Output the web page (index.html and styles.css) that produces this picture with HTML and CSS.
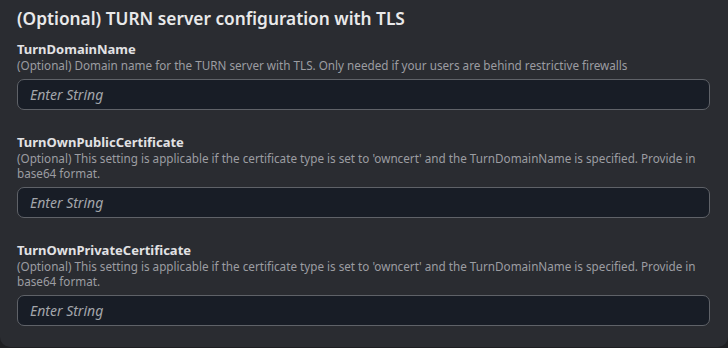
FILE: index.html
```html
<!DOCTYPE html>
<html>
<head>
<meta charset="utf-8">
<link rel="stylesheet" href="styles.css">
</head>
<body>
<div class="card">
  <h2 class="title">(Optional) TURN server configuration with TLS</h2>
  <div class="field">
    <div class="label">TurnDomainName</div>
    <div class="desc">(Optional) Domain name for the TURN server with TLS. Only needed if your users are behind restrictive firewalls</div>
    <input class="input" type="text" placeholder="Enter String">
  </div>
  <div class="field">
    <div class="label">TurnOwnPublicCertificate</div>
    <div class="desc">(Optional) This setting is applicable if the certificate type is set to 'owncert' and the TurnDomainName is specified. Provide in base64 format.</div>
    <input class="input" type="text" placeholder="Enter String">
  </div>
  <div class="field">
    <div class="label">TurnOwnPrivateCertificate</div>
    <div class="desc">(Optional) This setting is applicable if the certificate type is set to 'owncert' and the TurnDomainName is specified. Provide in base64 format.</div>
    <input class="input" type="text" placeholder="Enter String">
  </div>
</div>
</body>
</html>
```
FILE: styles.css
```css
html, body {
  margin: 0;
  padding: 0;
  background: #1e1f22;
  height: 348px;
  overflow: hidden;
}
body {
  font-family: "Noto Sans", "Open Sans", sans-serif;
}
.card {
  background: #2a2c31;
  border-radius: 0 0 10px 10px;
  height: 347px;
  box-sizing: border-box;
  padding: 7px 18px 0 17px;
  display: flex;
  flex-direction: column;
  gap: 23px;
}
.title {
  margin: 0 0 -14px 0;
  font-size: 17.3px;
  line-height: 24px;
  font-weight: 600;
  color: #e9e9ea;
}
.field {
  display: flex;
  flex-direction: column;
}
.label {
  font-size: 13px;
  line-height: 18px;
  font-weight: 700;
  color: #e2e2e4;
}
.desc {
  font-size: 11.7px;
  line-height: 15px;
  color: #9c9da2;
  margin-bottom: 6px;
}
.input {
  box-sizing: border-box;
  height: 31px;
  width: 100%;
  margin: 0;
  background: #181d26;
  border: 1px solid #5f6268;
  border-radius: 7px;
  padding: 0 12px;
  font-family: "Noto Sans", "Open Sans", sans-serif;
  font-size: 14px;
  color: #e2e2e4;
  outline: none;
}
.input::placeholder {
  font-style: italic;
  color: #a3a6ab;
}
```
